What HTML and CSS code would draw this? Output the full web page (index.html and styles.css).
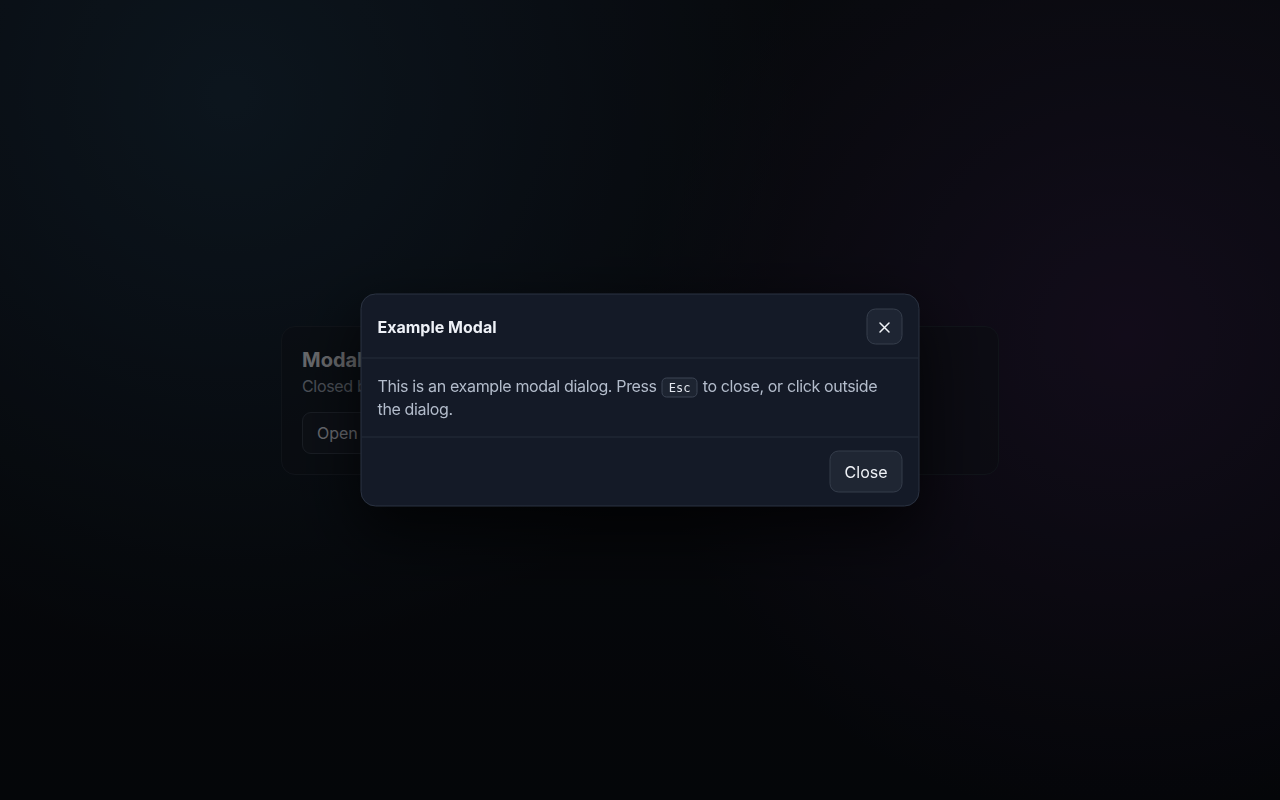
FILE: index.html
```html
<!DOCTYPE html>
<html lang="en">
<head>
    <meta charset="UTF-8">
    <meta name="viewport" content="width=device-width, initial-scale=1.0">
    <title>Modal</title>
    <link rel="stylesheet" href="styles.css">
</head>
<body>
    <main class="page">
        <section class="card">
            <h2 class="card-title">Modal Dialog</h2>
            <p class="card-subtitle">Closed by pressing Esc or clicking the backdrop.</p>
            <button class="btn btn-ghost" type="button">Open modal</button>
        </section>
    </main>

    <div class="overlay"></div>

    <div class="modal" role="dialog" aria-labelledby="modalTitle">
        <header class="modal-header">
            <h3 id="modalTitle">Example Modal</h3>
            <button class="icon-btn" type="button" aria-label="Close">
                <svg width="16" height="16" viewBox="0 0 16 16" fill="none" stroke="currentColor" stroke-width="1.5" stroke-linecap="round">
                    <path d="M3.5 3.5l9 9M12.5 3.5l-9 9"/>
                </svg>
            </button>
        </header>
        <div class="modal-body">
            <p>This is an example modal dialog. Press <kbd>Esc</kbd> to close, or click outside the dialog.</p>
        </div>
        <footer class="modal-footer">
            <button class="btn" type="button">Close</button>
        </footer>
    </div>
</body>
</html>
```

FILE: styles.css
```css
* {
    margin: 0;
    padding: 0;
    box-sizing: border-box;
}

body {
    font-family: Inter, 'Noto Sans', sans-serif;
    color: #e5e9f0;
    min-height: 100vh;
    background:
        radial-gradient(circle at 18% 12%, rgba(32, 62, 86, 0.6) 0%, rgba(32, 62, 86, 0) 45%),
        radial-gradient(circle at 88% 42%, rgba(64, 36, 86, 0.5) 0%, rgba(64, 36, 86, 0) 40%),
        linear-gradient(180deg, #10141c 0%, #0a0d13 100%);
    overflow: hidden;
}

.page {
    min-height: 100vh;
    display: flex;
    align-items: center;
    justify-content: center;
}

.card {
    width: 718px;
    padding: 19px 20px 20px;
    border: 1px solid #232a36;
    border-radius: 14px;
    background: rgba(22, 27, 37, 0.55);
}

.card-title {
    font-size: 20px;
    font-weight: 700;
    line-height: 28px;
    color: #d5d8de;
}

.card-subtitle {
    font-size: 16px;
    line-height: 24px;
    letter-spacing: -0.02em;
    color: #9aa3b2;
    margin-bottom: 14px;
}

.btn {
    font-family: inherit;
    font-size: 16px;
    line-height: 22px;
    color: #eef1f6;
    background: #1f2633;
    border: 1px solid #353d4b;
    border-radius: 9px;
    padding: 9px 14px;
    cursor: pointer;
}

.btn-ghost {
    color: #d6dbe4;
    background: #1a202c;
}

.overlay {
    position: fixed;
    inset: 0;
    background: rgba(0, 0, 0, 0.52);
}

.modal {
    position: fixed;
    top: 50%;
    left: 50%;
    transform: translate(-50%, -50%);
    width: 559px;
    background: #141a27;
    border: 1px solid #2b3342;
    border-radius: 15px;
    box-shadow: 0 24px 60px rgba(0, 0, 0, 0.7);
}

.modal-header {
    display: flex;
    align-items: center;
    justify-content: space-between;
    padding: 14px 16px 13px;
    border-bottom: 1px solid #252d3a;
}

.modal-header h3 {
    font-size: 16px;
    font-weight: 700;
    color: #eef1f7;
}

.icon-btn {
    width: 36px;
    height: 36px;
    display: flex;
    align-items: center;
    justify-content: center;
    padding-top: 2px;
    color: #f1f4f8;
    background: #1e2533;
    border: 1px solid #363e4c;
    border-radius: 9px;
    cursor: pointer;
}

.modal-body {
    padding: 16px;
    border-bottom: 1px solid #252d3a;
}

.modal-body p {
    font-size: 16px;
    line-height: 23px;
    letter-spacing: -0.022em;
    color: #b3bccb;
}

kbd {
    display: inline-block;
    font-family: 'DejaVu Sans Mono', monospace;
    font-size: 12px;
    line-height: 16px;
    letter-spacing: 0;
    padding: 1px 6px;
    margin: 0 1px;
    color: #e2e6ee;
    background: #1d2431;
    border: 1px solid #3c4454;
    border-radius: 5px;
    vertical-align: 0;
}

.modal-footer {
    display: flex;
    justify-content: flex-end;
    padding: 13px 16px;
}
```
